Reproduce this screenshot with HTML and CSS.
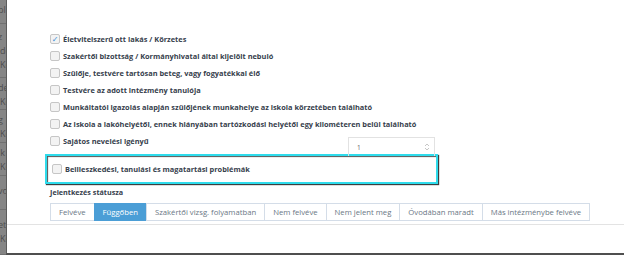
FILE: index.html
```html
<!DOCTYPE html>
<html lang="hu">
<head>
    <meta charset="UTF-8">
    <meta name="viewport" content="width=device-width, initial-scale=1.0">
    <title>Jelentkezés</title>
    <link rel="stylesheet" href="styles.css">
</head>
<body>
    <div class="page">
        <div class="backdrop">
            <div class="bg-cell c1">bl</div>
            <div class="bg-cell c2">z<br>de<br>Kö</div>
            <div class="bg-cell c3">de<br>Kö</div>
            <div class="bg-cell c3">g<br>Kö</div>
            <div class="bg-cell c3">ik<br>Kö</div>
            <div class="bg-cell c4">vo</div>
            <div class="bg-cell c5">et<br>Kö</div>
        </div>

        <div class="modal">
            <div class="modal-body">
                <label class="check-row"><span class="box checked">✓</span>Életvitelszerű ott lakás / Körzetes</label>
                <label class="check-row"><span class="box"></span>Szakértői bizottság / Kormányhivatal által kijelölt nebuló</label>
                <label class="check-row"><span class="box"></span>Szülője, testvére tartósan beteg, vagy fogyatékkal élő</label>
                <label class="check-row"><span class="box"></span>Testvére az adott intézmény tanulója</label>
                <label class="check-row"><span class="box"></span>Munkáltatói igazolás alapján szülőjének munkahelye az iskola körzetében található</label>
                <label class="check-row"><span class="box"></span>Az iskola a lakóhelyétől, ennek hiányában tartózkodási helyétől egy kilométeren belül található</label>
                <div class="check-row split">
                    <label class="check-label"><span class="box"></span>Sajátos nevelési igényű</label>
                    <div class="number-input">
                        <span>1</span>
                        <svg class="spin" width="6" height="10" viewBox="0 0 6 10">
                            <path d="M1 4 L3 2 L5 4" fill="none" stroke="#b8b8b8" stroke-width="0.8"/>
                            <path d="M1 6 L3 8 L5 6" fill="none" stroke="#b8b8b8" stroke-width="0.8"/>
                        </svg>
                    </div>
                </div>

                <div class="focused">
                    <label class="check-row"><span class="box"></span>Beilleszkedési, tanulási és magatartási problémák</label>
                </div>

                <p class="field-title">Jelentkezés státusza</p>
                <div class="btn-group">
                    <button>Felvéve</button>
                    <button class="active">Függőben</button>
                    <button>Szakértői vizsg. folyamatban</button>
                    <button>Nem felvéve</button>
                    <button>Nem jelent meg</button>
                    <button>Óvodában maradt</button>
                    <button>Más intézménybe felvéve</button>
                </div>
            </div>
            <div class="modal-footer"></div>
        </div>
    </div>
</body>
</html>
```

FILE: styles.css
```css
body {
    margin: 0;
    background: #7a7a7a;
    font-family: "Open Sans", "DejaVu Sans", sans-serif;
    overflow: hidden;
}
.page {
    display: flex;
    width: 624px;
    height: 255px;
}
.backdrop {
    width: 6px;
    overflow: hidden;
    display: flex;
    flex-direction: column;
    background: #858585;
}
.bg-cell {
    font-size: 9px;
    line-height: 14px;
    color: #4e4e4e;
    white-space: nowrap;
    text-indent: -2px;
    border-bottom: 1px solid #707070;
    padding-top: 3px;
}
.c1 { height: 22px; }
.c2 { height: 52px; padding-top: 6px; }
.c3 { height: 32px; padding-top: 3px; }
.c4 { height: 28px; padding-top: 8px; }
.c5 { height: 40px; padding-top: 8px; }
.modal {
    flex: 1;
    height: 253px;
    background: #ffffff;
    border-left: 1px solid #5c5c5c;
    border-bottom: 2px solid #4f4f4f;
    display: flex;
    flex-direction: column;
}
.modal-body {
    padding: 30px 0 0 43px;
}
.check-row {
    display: flex;
    align-items: center;
    height: 17px;
    font-size: 7.4px;
    font-weight: bold;
    color: #36404c;
    white-space: nowrap;
}
.check-label {
    display: flex;
    align-items: center;
}
.box {
    width: 8px;
    height: 8px;
    border: 1px solid #c6c6c6;
    border-radius: 2px;
    background: #f3f3f3;
    margin-right: 3px;
    font-size: 8px;
    line-height: 8px;
    color: #3b8fd6;
    text-align: center;
    font-weight: normal;
}
.split {
    width: 385px;
    justify-content: space-between;
    align-items: flex-start;
}
.split .check-label {
    height: 17px;
}
.number-input {
    width: 87px;
    height: 19px;
    margin-top: 5px;
    border: 1px solid #e2e2e2;
    border-bottom: none;
    display: flex;
    justify-content: space-between;
    align-items: center;
    padding: 0 4px 0 8px;
    box-sizing: border-box;
    font-weight: normal;
    font-size: 6.5px;
    color: #666666;
}
.focused {
    width: 386px;
    height: 26px;
    margin: 5px 0 0 -5px;
    padding-left: 3px;
    border: 2px solid #2fdcec;
    box-shadow: 1px 1px 1px #3d3d3d, inset 1px 1px 1px #555555;
    display: flex;
    align-items: center;
    background: #ffffff;
}
.focused .check-row {
    padding-left: 2px;
}
.field-title {
    margin: 2px 0 0;
    font-size: 7.2px;
    line-height: 12px;
    font-weight: bold;
    color: #36404c;
}
.btn-group {
    display: flex;
    margin: 5px 0 0 1px;
}
.btn-group button {
    height: 18px;
    padding: 0 8px;
    border: 1px solid #d4dde8;
    margin-left: -1px;
    background: #ffffff;
    font-family: "Open Sans", "DejaVu Sans", sans-serif;
    font-size: 7.7px;
    color: #6b7785;
    white-space: nowrap;
}
.btn-group button.active {
    background: #4b9ed6;
    border-color: #4b9ed6;
    color: #ffffff;
}
.modal-footer {
    margin-top: 3px;
    border-top: 1px solid #e3e3e3;
}
```
